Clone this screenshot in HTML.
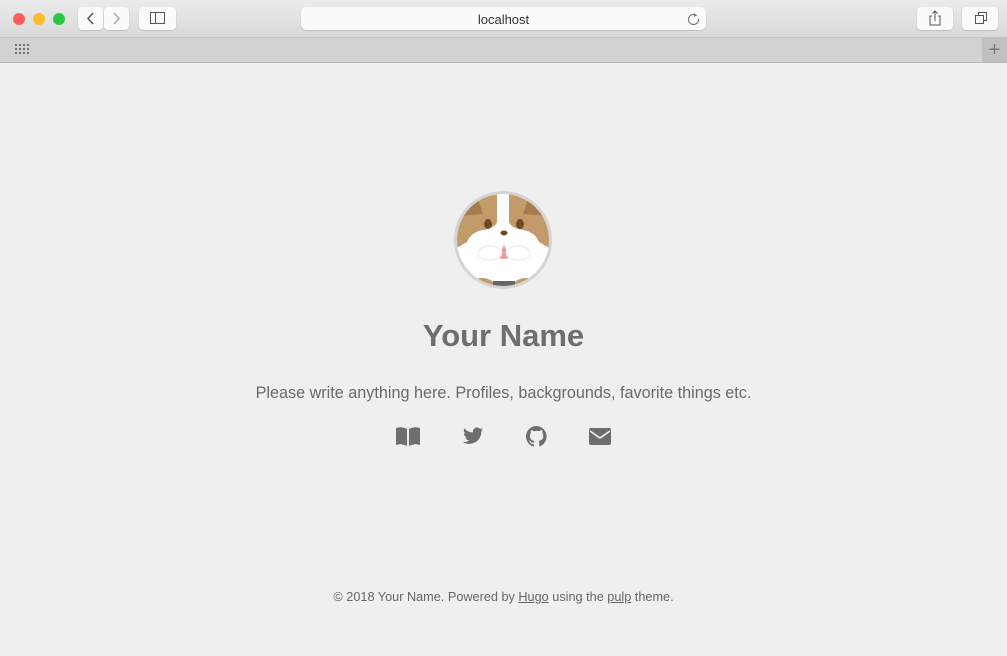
<!DOCTYPE html>
<html><head><meta charset="utf-8"><style>
*{margin:0;padding:0;box-sizing:border-box}
body{width:1007px;height:656px;overflow:hidden;background:#efefef;font-family:"Liberation Sans",Helvetica,Arial,sans-serif;position:relative}
.tb{position:absolute;left:0;top:0;width:1007px;height:38px;background:linear-gradient(#ebebeb,#d9d9d9);border-bottom:1px solid #c4c4c4}
.tabs{position:absolute;left:0;top:38px;width:1007px;height:25px;background:#d2d2d2;border-bottom:1px solid #b9b9b9}
.dot{position:absolute;top:13px;width:12px;height:12px;border-radius:50%}
.btn{position:absolute;top:7px;height:23px;background:#fbfbfb;border-radius:4px;box-shadow:0 0.5px 1px rgba(0,0,0,.25)}
.url{position:absolute;left:301px;top:7px;width:405px;height:23px;background:#fbfbfb;border-radius:5px;box-shadow:0 0.5px 1px rgba(0,0,0,.25);text-align:center;font-size:13px;line-height:25px;color:#333}
h1{position:absolute;top:318px;width:100%;text-align:center;font-size:31px;font-weight:bold;color:#6e6e6e}
.desc{position:absolute;top:384px;width:100%;text-align:center;font-size:16.2px;color:#6a6a6a}
.foot{position:absolute;top:590px;width:100%;text-align:center;font-size:12.7px;color:#666}
.foot a{color:#666}
.ic{position:absolute;top:426px}
</style></head><body>
<div class="tb">
<div class="dot" style="left:13px;background:#fd5e57"></div>
<div class="dot" style="left:33px;background:#fdbc2e"></div>
<div class="dot" style="left:53px;background:#29c840"></div>
<div class="btn" style="left:78px;width:25px"><svg width="25" height="23"><path d="M15 6l-5 5.5 5 5.5" fill="none" stroke="#555" stroke-width="1.5"/></svg></div>
<div class="btn" style="left:104px;width:25px"><svg width="25" height="23"><path d="M10 6l5 5.5-5 5.5" fill="none" stroke="#aaa" stroke-width="1.5"/></svg></div>
<div class="btn" style="left:139px;width:37px"><svg width="37" height="23"><rect x="11.5" y="5.5" width="14" height="11" fill="none" stroke="#555"/><line x1="16.5" y1="5.5" x2="16.5" y2="16.5" stroke="#555"/></svg></div>
<div class="url">localhost<svg style="position:absolute;right:6px;top:5px" width="13" height="13"><path d="M9.5 3.5A5 5 0 1 0 11.5 7" fill="none" stroke="#777" stroke-width="1.2"/><path d="M7 1l3 2.5-3 1.5z" fill="#777"/></svg></div>
<div class="btn" style="left:917px;width:36px"><svg width="36" height="23"><path d="M15 9h-2v9h10V9h-2M18 14V4M15.5 6.5L18 4l2.5 2.5" fill="none" stroke="#555"/></svg></div>
<div class="btn" style="left:962px;width:36px"><svg width="36" height="23"><rect x="13.5" y="8.5" width="8" height="8" fill="none" stroke="#555"/><path d="M16.5 8.5V5.5h8v8h-3" fill="none" stroke="#555"/></svg></div>
</div>
<div class="tabs">
<svg style="position:absolute;left:15px;top:6px" width="16" height="12"><g fill="#555"><circle cx="1" cy="1" r="1"/><circle cx="5" cy="1" r="1"/><circle cx="9" cy="1" r="1"/><circle cx="13" cy="1" r="1"/><circle cx="1" cy="5" r="1"/><circle cx="5" cy="5" r="1"/><circle cx="9" cy="5" r="1"/><circle cx="13" cy="5" r="1"/><circle cx="1" cy="9" r="1"/><circle cx="5" cy="9" r="1"/><circle cx="9" cy="9" r="1"/><circle cx="13" cy="9" r="1"/></g></svg>
<div style="position:absolute;left:982px;top:0;width:25px;height:24px;background:#c0c0c0;color:#777;font-size:20px;text-align:center;line-height:24px">+</div>
</div>
<svg style="position:absolute;left:453px;top:190px" width="100" height="100" viewBox="0 0 100 100">
<defs><clipPath id="c"><circle cx="50" cy="50" r="46"/></clipPath></defs>
<circle cx="50" cy="50" r="49" fill="#d4d4d4"/>
<circle cx="50" cy="50" r="46" fill="#fff"/>
<g clip-path="url(#c)">
<path d="M0 0h100v58H0z" fill="#c39a69"/>
<path d="M44 0h12v32q2 6 14 8q12 2 16 12L100 60V100H0V60L14 52q4-10 16-12q12-2 14-8z" fill="#fff"/>
<path d="M6 26q4-16 18-20l6 18z" fill="#a57c4d"/><path d="M94 26q-4-16-18-20l-6 18z" fill="#a57c4d"/>
<ellipse cx="35" cy="34" rx="4" ry="5" fill="#6b4a28"/><ellipse cx="67" cy="34" rx="4" ry="5" fill="#6b4a28"/>
<ellipse cx="51" cy="43" rx="3.5" ry="2.5" fill="#6b4a28"/>
<path d="M45 67l6-12 6 12q-6 4-12 0z" fill="#ef9a9a"/>
<ellipse cx="37" cy="63" rx="12" ry="7" fill="#fff" stroke="#e6e6e6"/><ellipse cx="65" cy="63" rx="12" ry="7" fill="#fff" stroke="#e6e6e6"/>
<ellipse cx="29" cy="97" rx="13" ry="9" fill="#c39a69"/><ellipse cx="73" cy="97" rx="13" ry="9" fill="#c39a69"/>
<rect x="40" y="91" width="22" height="8" fill="#666"/>
</g></svg>
<h1>Your Name</h1>
<div class="desc">Please write anything here. Profiles, backgrounds, favorite things etc.</div>
<svg class="ic" style="left:396px" width="24" height="20" viewBox="0 0 24 20"><path d="M0 2q5-2 11 1v17q-6-3-11-1zM24 2q-5-2-11 1v17q6-3 11-1z" fill="#6e6e6e"/></svg>
<svg class="ic" style="left:462px" width="22" height="20" viewBox="0 0 24 20"><path d="M23 3q-1 .5-2.5.7 1.5-1 2-2.5-1.3.8-2.8 1A4.5 4.5 0 0 0 12 6.2 13 13 0 0 1 2.5 1.5 4.5 4.5 0 0 0 4 7.5q-1 0-2-.6a4.5 4.5 0 0 0 3.6 4.5q-1 .3-2 .1a4.5 4.5 0 0 0 4.2 3.1A9 9 0 0 1 1 16.5a13 13 0 0 0 20-11.4q1.2-.9 2-2.1z" fill="#6e6e6e"/></svg>
<svg class="ic" style="left:526px" width="21" height="21" viewBox="0 0 16 16"><path fill="#6e6e6e" d="M8 0a8 8 0 0 0-2.5 15.6c.4 0 .5-.2.5-.4v-1.5c-2.2.5-2.7-1-2.7-1-.4-.9-.9-1.2-.9-1.2-.7-.5.1-.5.1-.5.8.1 1.2.8 1.2.8.7 1.3 1.9.9 2.4.7 0-.5.3-.9.5-1.100-1.8-.2-3.6-.9-3.6-4 0-.9.3-1.6.8-2.1-.1-.2-.4-1 .1-2.1 0 0 .7-.2 2.2.8a7.5 7.5 0 0 1 4 0c1.5-1 2.2-.8 2.2-.8.4 1.1.2 1.9.1 2.1.5.6.8 1.3.8 2.1 0 3.1-1.9 3.7-3.6 3.9.3.3.5.8.5 1.5v2.2c0 .2.1.5.6.4A8 8 0 0 0 8 0z"/></svg>
<svg class="ic" style="left:589px;top:428px" width="22" height="17" viewBox="0 0 22 17"><rect width="22" height="17" rx="2" fill="#6e6e6e"/><path d="M1 3l10 7 10-7" fill="none" stroke="#efefef" stroke-width="1.6"/></svg>
<div class="foot">© 2018 Your Name. Powered by <a href="#">Hugo</a> using the <a href="#">pulp</a> theme.</div>
</body></html>
